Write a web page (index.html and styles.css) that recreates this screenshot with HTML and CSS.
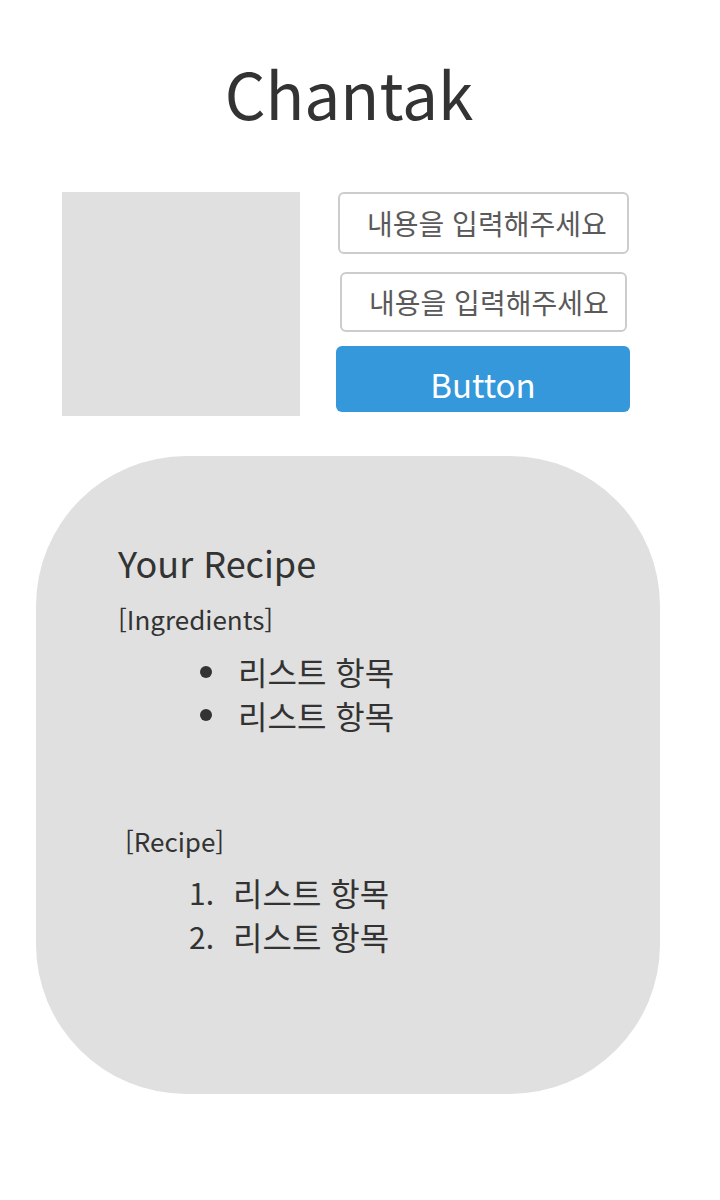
FILE: index.html
```html
<!DOCTYPE html>
<html lang="ko">
<head>
<meta charset="utf-8">
<title>Chantak</title>
<link rel="stylesheet" href="styles.css">
</head>
<body>
<h1 class="title">Chantak</h1>
<section class="top-row">
  <div class="photo"></div>
  <div class="form">
    <input class="field field-a" type="text" placeholder="내용을 입력해주세요">
    <input class="field field-b" type="text" placeholder="내용을 입력해주세요">
    <button class="btn" type="button">Button</button>
  </div>
</section>
<section class="card">
  <h2 class="card-title">Your Recipe</h2>
  <p class="label">[Ingredients]</p>
  <ul class="list bullets">
    <li>리스트 항목</li>
    <li>리스트 항목</li>
  </ul>
  <p class="label label-recipe">[Recipe]</p>
  <ol class="list numbers">
    <li>리스트 항목</li>
    <li>리스트 항목</li>
  </ol>
</section>
</body>
</html>
```

FILE: styles.css
```css
* { box-sizing: border-box; }
body {
  margin: 0;
  width: 720px;
  font-family: "Noto Sans CJK KR", "Noto Sans", sans-serif;
  color: #333333;
  background: #ffffff;
}
.title {
  margin: 0;
  padding-top: 50px;
  height: 192px;
  text-align: center;
  font-size: 64px;
  font-weight: 400;
  line-height: 84px;
  color: #333333;
  padding-right: 22px;
}
.top-row {
  display: flex;
  align-items: flex-start;
  padding-left: 62px;
  gap: 36px;
}
.photo {
  width: 238px;
  height: 224px;
  background: #e0e0e0;
}
.form {
  width: 294px;
  display: flex;
  flex-direction: column;
}
.field {
  font-family: inherit;
  font-size: 28px;
  color: #5a5a5a;
  border: 2px solid #cccccc;
  border-radius: 6px;
  background: #fff;
  padding: 0 0 0 27px;
  outline: none;
}
.field::placeholder { color: #5a5a5a; }
.field-a { height: 62px; margin: 0 1px 0 2px; }
.field-b { height: 60px; margin: 18px 3px 0 4px; }
.btn {
  margin-top: 14px;
  height: 66px;
  border: none;
  border-radius: 6px;
  background: #3498db;
  color: #ffffff;
  font-family: inherit;
  font-size: 33px;
  padding-top: 12px;
  line-height: 1;
}
.card {
  margin: 40px 0 0 36px;
  width: 624px;
  height: 638px;
  border-radius: 150px;
  background: #e0e0e0;
  padding: 82px 0 0 82px;
}
.card-title {
  margin: 0;
  font-size: 36px;
  font-weight: 400;
  line-height: 48px;
}
.label {
  margin: 15px 0 0;
  font-size: 26px;
  line-height: 36px;
}
.list {
  list-style: none;
  margin: 13px 0 0;
  padding: 0;
  font-size: 32px;
  line-height: 43.5px;
}
.list li {
  display: flex;
  align-items: center;
}
.bullets li::before {
  content: "";
  width: 12px;
  height: 12px;
  border-radius: 50%;
  background: #333333;
  margin-left: 82px;
  margin-right: 26px;
}
.label-recipe { margin-top: 86px; margin-left: 7px; }
.numbers { margin-top: 12px; counter-reset: step; }
.numbers li { counter-increment: step; }
.numbers li::before {
  content: counter(step) ".";
  width: 44px;
  margin-left: 71px;
  font-size: 30px;
}
```
